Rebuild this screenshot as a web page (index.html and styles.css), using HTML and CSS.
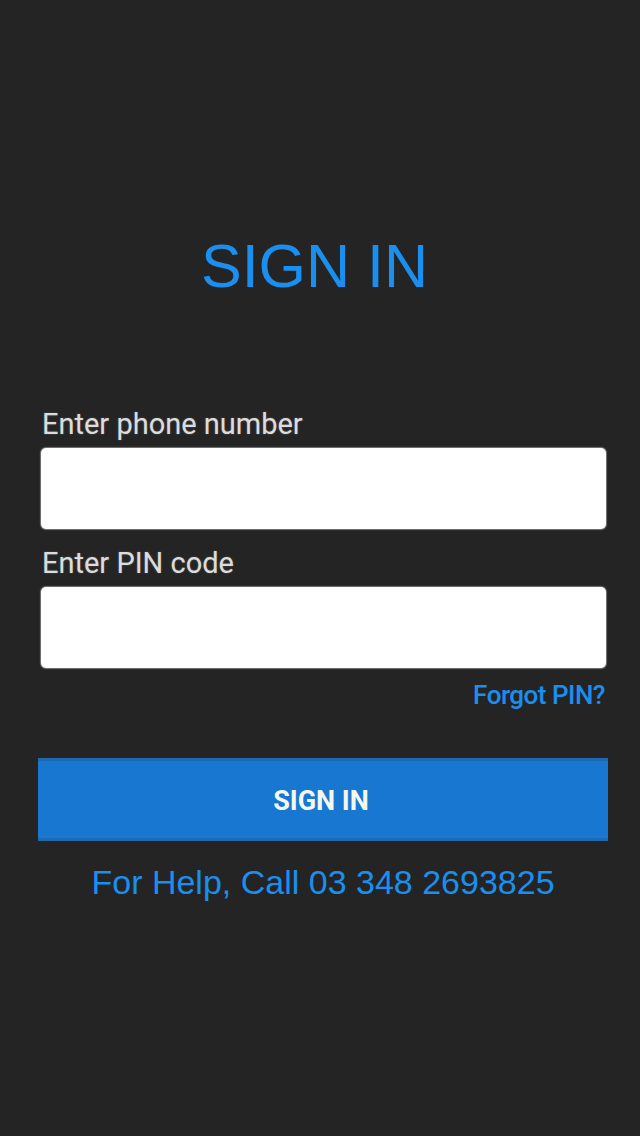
FILE: index.html
```html
<!DOCTYPE html>
<html>
<head>
<meta charset="utf-8">
<link rel="stylesheet" href="styles.css">
</head>
<body>
<div class="screen">
  <h1 class="title">SIGN IN</h1>
  <form class="form">
    <label class="label">Enter phone number</label>
    <div class="field"></div>
    <label class="label label-pin">Enter PIN code</label>
    <div class="field"></div>
    <div class="forgot-row"><span class="forgot">Forgot PIN?</span></div>
    <div class="button">SIGN IN</div>
    <p class="help">For Help, Call 03 348 2693825</p>
  </form>
</div>
</body>
</html>
```
FILE: styles.css
```css
html, body {
  margin: 0;
  padding: 0;
  background: #242424;
}
.screen {
  width: 640px;
  height: 1136px;
  display: flex;
  flex-direction: column;
  font-family: Roboto, "Liberation Sans", sans-serif;
}
.title {
  margin: 232px 0 0 0;
  padding-right: 11px;
  text-align: center;
  font-family: "Liberation Sans", Arial, sans-serif;
  font-weight: normal;
  font-size: 61px;
  line-height: 68px;
  color: #1a8ff0;
}
.form {
  margin: 106px 0 0 38px;
  width: 570px;
  display: flex;
  flex-direction: column;
}
.label {
  margin-left: 4px;
  font-size: 29px;
  line-height: 36px;
  color: #dcdcdc;
  text-shadow: 0 0 2px rgba(255,255,255,0.25);
}
.label-pin {
  margin-top: 16px;
}
.field {
  margin: 6px 2px 0 3px;
  height: 81px;
  background: #fff;
  border-radius: 5px;
  box-shadow: 0 0 1px 1px rgba(200,200,200,0.5);
}
.forgot-row {
  display: flex;
  justify-content: flex-end;
  margin-top: 10px;
  padding-right: 3px;
}
.forgot {
  font-size: 26px;
  line-height: 34px;
  font-weight: 500;
  letter-spacing: -0.5px;
  color: #1a8ff0;
}
.button {
  margin-top: 46px;
  height: 77px;
  padding-right: 4px;
  padding-top: 3px;
  box-sizing: border-box;
  height: 83px;
  background: #1777d1;
  border-top: 3px solid #1e69b0;
  border-bottom: 3px solid #1e69b0;
  display: flex;
  align-items: center;
  justify-content: center;
  font-size: 27px;
  font-weight: bold;
  color: #f4f8ec;
}
.help {
  margin: 21px 0 0 0;
  text-align: center;
  font-family: "Liberation Sans", Arial, sans-serif;
  font-size: 34px;
  line-height: 40px;
  color: #1a8ff0;
}
```
